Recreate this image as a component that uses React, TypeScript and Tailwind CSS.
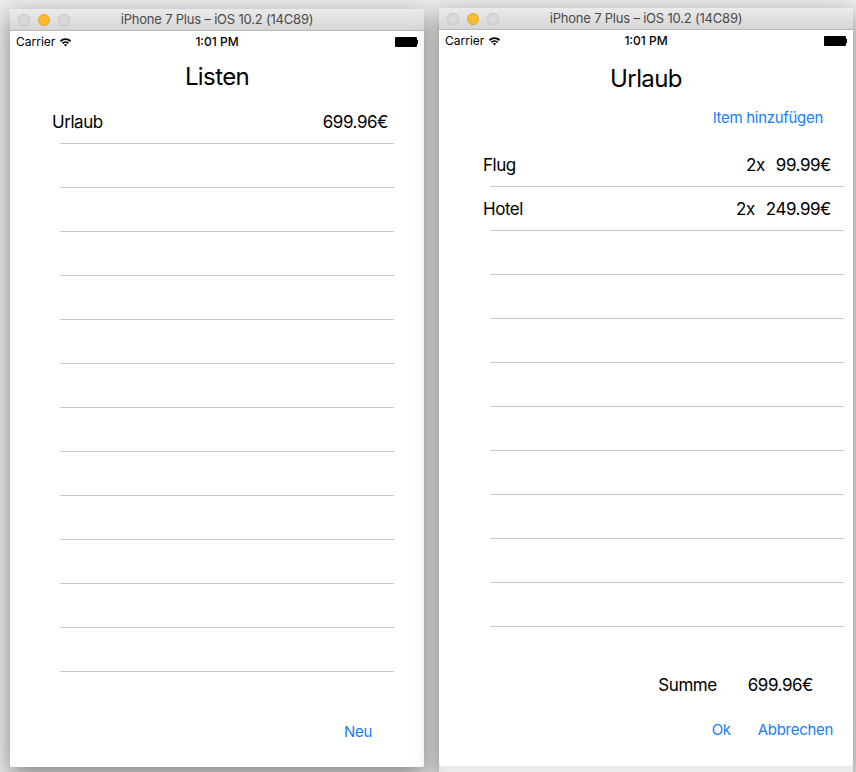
import React from 'react';

const font = { fontFamily: 'Inter, "Liberation Sans", sans-serif' };

const Wifi = () => (
  <svg width="13" height="10" viewBox="0 0 13 10" className="ml-[4px]">
    <path d="M0.8 3.6 A8 8 0 0 1 12.2 3.6 L10.9 4.9 A6.2 6.2 0 0 0 2.1 4.9 Z" fill="#000" />
    <path d="M2.9 5.7 A5 5 0 0 1 10.1 5.7 L8.8 7 A3.2 3.2 0 0 0 4.2 7 Z" fill="#000" />
    <path d="M5 7.8 A2.1 2.1 0 0 1 8 7.8 L6.5 9.4 Z" fill="#000" />
  </svg>
);

const Battery = () => (
  <div className="flex items-center">
    <div className="h-[10px] w-[22px] rounded-[1px] bg-black" />
    <div className="h-[4px] w-[1.5px] bg-black" />
  </div>
);

const TitleBar = () => (
  <div className="relative flex h-[22px] items-center justify-center rounded-t-[5px] border-b border-[#b9b9b9] bg-gradient-to-b from-[#ecebec] to-[#d6d5d6]">
    <div className="absolute left-[8px] top-[5px] flex gap-[8px]">
      <span className="h-[12px] w-[12px] rounded-full border border-[#c6c6c6] bg-[#d9d8d9]" />
      <span className="h-[12px] w-[12px] rounded-full border border-[#e0a628] bg-[#fdbc2f]" />
      <span className="h-[12px] w-[12px] rounded-full border border-[#c6c6c6] bg-[#d9d8d9]" />
    </div>
    <span className="text-[13px] tracking-[-0.2px] text-[#4a4a4a]">iPhone 7 Plus – iOS 10.2 (14C89)</span>
  </div>
);

const StatusBar = () => (
  <div className="relative flex h-[20px] items-center justify-between pl-[6px] pr-[6px] pt-[1px] text-[12px] text-black">
    <div className="flex items-center">
      <span>Carrier</span>
      <Wifi />
    </div>
    <span className="absolute left-0 right-0 text-center font-medium">1:01 PM</span>
    <Battery />
  </div>
);

const Window: React.FC<{ children: React.ReactNode }> = ({ children }) => (
  <div className="w-[414px] shadow-[0_8px_22px_rgba(0,0,0,0.45)]">
    <TitleBar />
    <div className="flex h-[736px] flex-col rounded-b-[4px] bg-white">
      <StatusBar />
      {children}
    </div>
  </div>
);

const listRows = ['Urlaub', '', '', '', '', '', '', '', '', '', '', '', ''];

const items = [
  { name: 'Flug', qty: '2x', price: '99.99€' },
  { name: 'Hotel', qty: '2x', price: '249.99€' },
];

export default function App() {
  return (
    <div className="flex h-[772px] w-[856px] gap-[15px] bg-[#ebebeb] pl-[10px] pt-[8px]" style={font}>
      <div className="pt-[1px]">
        <Window>
          <div className="flex h-[49px] items-center justify-center pt-[2px] text-[24px] tracking-[-0.6px] text-black">
            Listen
          </div>
          <div className="ml-[42px] mr-[30px]">
            {listRows.map((r, i) => (
              <div key={i} className="flex h-[44px] flex-col">
                <div className="flex flex-1 items-center justify-between pr-[6px] pt-[2px] text-[17px] tracking-[-0.45px] text-black">
                  <span>{r}</span>
                  <span>{r ? '699.96€' : ''}</span>
                </div>
                <div className="ml-[8px] h-px bg-[#c8c7cc]" />
              </div>
            ))}
          </div>
          <div className="mt-auto flex justify-end pb-[25px] pr-[52px] text-[15px] leading-[20px] tracking-[-0.3px] text-[#157efb]">
            Neu
          </div>
        </Window>
      </div>

      <Window>
        <div className="flex h-[56px] items-center justify-center pt-[2px] text-[24px] tracking-[-0.6px] text-black">
          Urlaub
        </div>
        <div className="flex h-[24px] items-center justify-end pr-[30px] text-[15px] tracking-[-0.3px] text-[#157efb]">
          Item hinzufügen
        </div>
        <div className="ml-[44px] mr-[9px] mt-[13px]">
          {Array.from({ length: 11 }).map((_, i) => {
            const it = items[i];
            return (
              <div key={i} className="flex h-[44px] flex-col">
                <div className="flex flex-1 items-center justify-between pr-[13px] pt-[2px] text-[17px] tracking-[-0.45px] text-black">
                  <span>{it ? it.name : ''}</span>
                  {it && (
                    <span className="flex gap-[11px]">
                      <span>{it.qty}</span>
                      <span>{it.price}</span>
                    </span>
                  )}
                </div>
                <div className="ml-[7px] h-px bg-[#c8c7cc]" />
              </div>
            );
          })}
        </div>
        <div className="mt-[48px] flex justify-end gap-[31px] pr-[40px] text-[17px] leading-[20px] tracking-[-0.45px] text-black">
          <span>Summe</span>
          <span>699.96€</span>
        </div>
        <div className="mt-auto flex justify-end gap-[27px] pb-[26px] pr-[20px] text-[15px] leading-[20px] tracking-[-0.3px] text-[#157efb]">
          <span>Ok</span>
          <span>Abbrechen</span>
        </div>
      </Window>
    </div>
  );
}
